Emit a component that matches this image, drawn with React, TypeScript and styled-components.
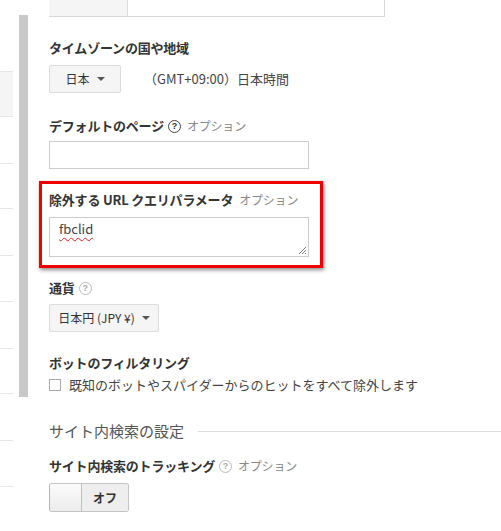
import React from 'react'
import styled, { createGlobalStyle } from 'styled-components'

const GlobalStyle = createGlobalStyle`
  html, body {
    margin: 0;
    padding: 0;
    background: #ffffff;
  }
  body {
    font-family: 'Noto Sans CJK JP', 'Liberation Sans', sans-serif;
    font-size: 13px;
    line-height: 18px;
    color: #333333;
    overflow: hidden;
  }
`

const Page = styled.div`
  display: flex;
  width: 501px;
  height: 531px;
  overflow: hidden;
`

const LeftNav = styled.ul`
  list-style: none;
  margin: 0;
  padding: 0;
  width: 13px;
  flex-shrink: 0;
`

const NavItem = styled.li<{ $active?: boolean; $h: number }>`
  height: ${p => p.$h}px;
  box-sizing: border-box;
  border-bottom: 1px solid #e6e6e6;
  background: ${p => (p.$active ? '#f5f5f5' : 'transparent')};
`

const Rail = styled.div`
  width: 9px;
  height: 382px;
  margin: 15px 0 0 6px;
  background: #c8c8c8;
  flex-shrink: 0;
`

const Main = styled.div`
  flex: 1;
  padding-left: 21px;
  min-width: 0;
`

const TopBox = styled.div`
  display: flex;
  width: 335px;
  height: 16px;
  border-bottom: 1px solid #d9d9d9;
  border-right: 1px solid #d9d9d9;
`

const TopSelect = styled.div`
  width: 78px;
  background: #f5f5f5;
  border-right: 1px solid #dcdcdc;
`

const Field = styled.div<{ $top: number }>`
  margin-top: ${p => p.$top}px;
`

const Label = styled.div`
  display: flex;
  align-items: center;
  height: 18px;
  font-weight: bold;
  font-size: 13px;
  color: #333333;
  letter-spacing: -0.2px;
`

const Optional = styled.span`
  font-weight: normal;
  font-size: 12px;
  color: #888888;
  margin-left: 6px;
`

const Help = styled.span<{ $dark?: boolean }>`
  display: inline-flex;
  align-items: center;
  justify-content: center;
  width: 13px;
  height: 13px;
  margin-left: 4px;
  border-radius: 50%;
  box-sizing: border-box;
  border: 1px solid ${p => (p.$dark ? '#444444' : '#bbbbbb')};
  color: ${p => (p.$dark ? '#333333' : '#aaaaaa')};
  font-size: 9px;
  font-weight: bold;
  font-family: 'Liberation Sans', sans-serif;
  line-height: 1;
`

const Row = styled.div<{ $gap: number }>`
  display: flex;
  align-items: center;
  margin-top: ${p => p.$gap}px;
`

const SelectButton = styled.div<{ $w: number }>`
  display: flex;
  align-items: center;
  justify-content: center;
  gap: 7px;
  width: ${p => p.$w}px;
  height: 28px;
  box-sizing: border-box;
  background: #f5f5f5;
  border: 1px solid #dcdcdc;
  border-radius: 2px;
  font-size: 12px;
  color: #333333;
`

const Caret = styled.span`
  width: 0;
  height: 0;
  border-left: 4px solid transparent;
  border-right: 4px solid transparent;
  border-top: 4px solid #555555;
`

const ZoneText = styled.span`
  margin-left: 23px;
  font-size: 13px;
  color: #444444;
`

const TextInput = styled.div`
  width: 260px;
  height: 28px;
  margin-top: 6px;
  box-sizing: border-box;
  border: 1px solid #cccccc;
  background: #ffffff;
`

const Highlight = styled.div`
  margin: 12px 0 0 -10px;
  width: 284px;
  height: 87px;
  box-sizing: border-box;
  border: 3px solid #ee0000;
  box-shadow: 1px 2px 4px rgba(0, 0, 0, 0.45);
  padding: 7px 0 0 7px;
`

const TextArea = styled.div`
  position: relative;
  width: 260px;
  height: 40px;
  margin-top: 8px;
  box-sizing: border-box;
  border: 1px solid #cccccc;
  padding: 2px 0 0 9px;
  font-size: 13px;
  color: #444444;
`

const Misspelled = styled.span`
  text-decoration: underline wavy #e02020;
  text-decoration-thickness: 1px;
  text-underline-offset: 3px;
`

const Grip = styled.svg`
  position: absolute;
  right: 1px;
  bottom: 1px;
`

const CheckRow = styled.label`
  display: flex;
  align-items: center;
  height: 18px;
  margin-top: 4px;
  font-size: 13px;
  color: #444444;
`

const Box = styled.span`
  width: 12px;
  height: 12px;
  box-sizing: border-box;
  border: 1px solid #aaaaaa;
  background: #ffffff;
  margin-right: 8px;
`

const SectionHead = styled.div`
  display: flex;
  align-items: center;
  margin-top: 26px;
  height: 22px;
  font-size: 15px;
  color: #555555;
`

const SectionLine = styled.span`
  flex: 1;
  height: 1px;
  background: #dddddd;
  margin-left: 14px;
`

const Toggle = styled.div`
  display: flex;
  width: 80px;
  height: 29px;
  margin-top: 8px;
  box-sizing: border-box;
  border: 1px solid #c4c4c4;
  border-left-color: #9fb8cc;
  border-radius: 3px;
  overflow: hidden;
`

const Knob = styled.span`
  width: 31px;
  background: linear-gradient(#fbfbfb, #ececec);
  border-right: 1px solid #bdbdbd;
`

const ToggleText = styled.span`
  flex: 1;
  display: flex;
  align-items: center;
  justify-content: center;
  background: #eeeeee;
  font-size: 12px;
  font-weight: bold;
  color: #333333;
`

const navHeights = [72, 45, 47, 45, 47, 46, 47, 45, 47, 46]

const App: React.FC = () => (
  <>
    <GlobalStyle />
    <Page>
      <LeftNav>
        {navHeights.map((h, i) => (
          <NavItem key={i} $h={h} $active={i === 1} />
        ))}
      </LeftNav>
      <Rail />
      <Main>
        <TopBox>
          <TopSelect />
        </TopBox>

        <Field $top={22}>
          <Label>タイムゾーンの国や地域</Label>
          <Row $gap={8}>
            <SelectButton $w={72}>
              日本 <Caret />
            </SelectButton>
            <ZoneText>（GMT+09:00）日本時間</ZoneText>
          </Row>
        </Field>

        <Field $top={24}>
          <Label>
            デフォルトのページ<Help $dark>?</Help>
            <Optional>オプション</Optional>
          </Label>
          <TextInput />
        </Field>

        <Highlight>
          <Label>
            除外する URL クエリパラメータ<Optional>オプション</Optional>
          </Label>
          <TextArea>
            <Misspelled>fbclid</Misspelled>
            <Grip width="9" height="9" viewBox="0 0 9 9">
              <path d="M8 1 L1 8 M8 4 L4 8 M8 7 L7 8" stroke="#777" strokeWidth="1" />
            </Grip>
          </TextArea>
        </Highlight>

        <Field $top={11}>
          <Label>
            通貨<Help>?</Help>
          </Label>
          <Row $gap={7}>
            <SelectButton $w={110}>
              日本円 (JPY ¥) <Caret />
            </SelectButton>
          </Row>
        </Field>

        <Field $top={22}>
          <Label>ボットのフィルタリング</Label>
          <CheckRow>
            <Box />
            既知のボットやスパイダーからのヒットをすべて除外します
          </CheckRow>
        </Field>

        <SectionHead>
          サイト内検索の設定
          <SectionLine />
        </SectionHead>

        <Field $top={15}>
          <Label>
            サイト内検索のトラッキング<Help>?</Help>
            <Optional>オプション</Optional>
          </Label>
          <Toggle>
            <Knob />
            <ToggleText>オフ</ToggleText>
          </Toggle>
        </Field>
      </Main>
    </Page>
  </>
)

export default App
